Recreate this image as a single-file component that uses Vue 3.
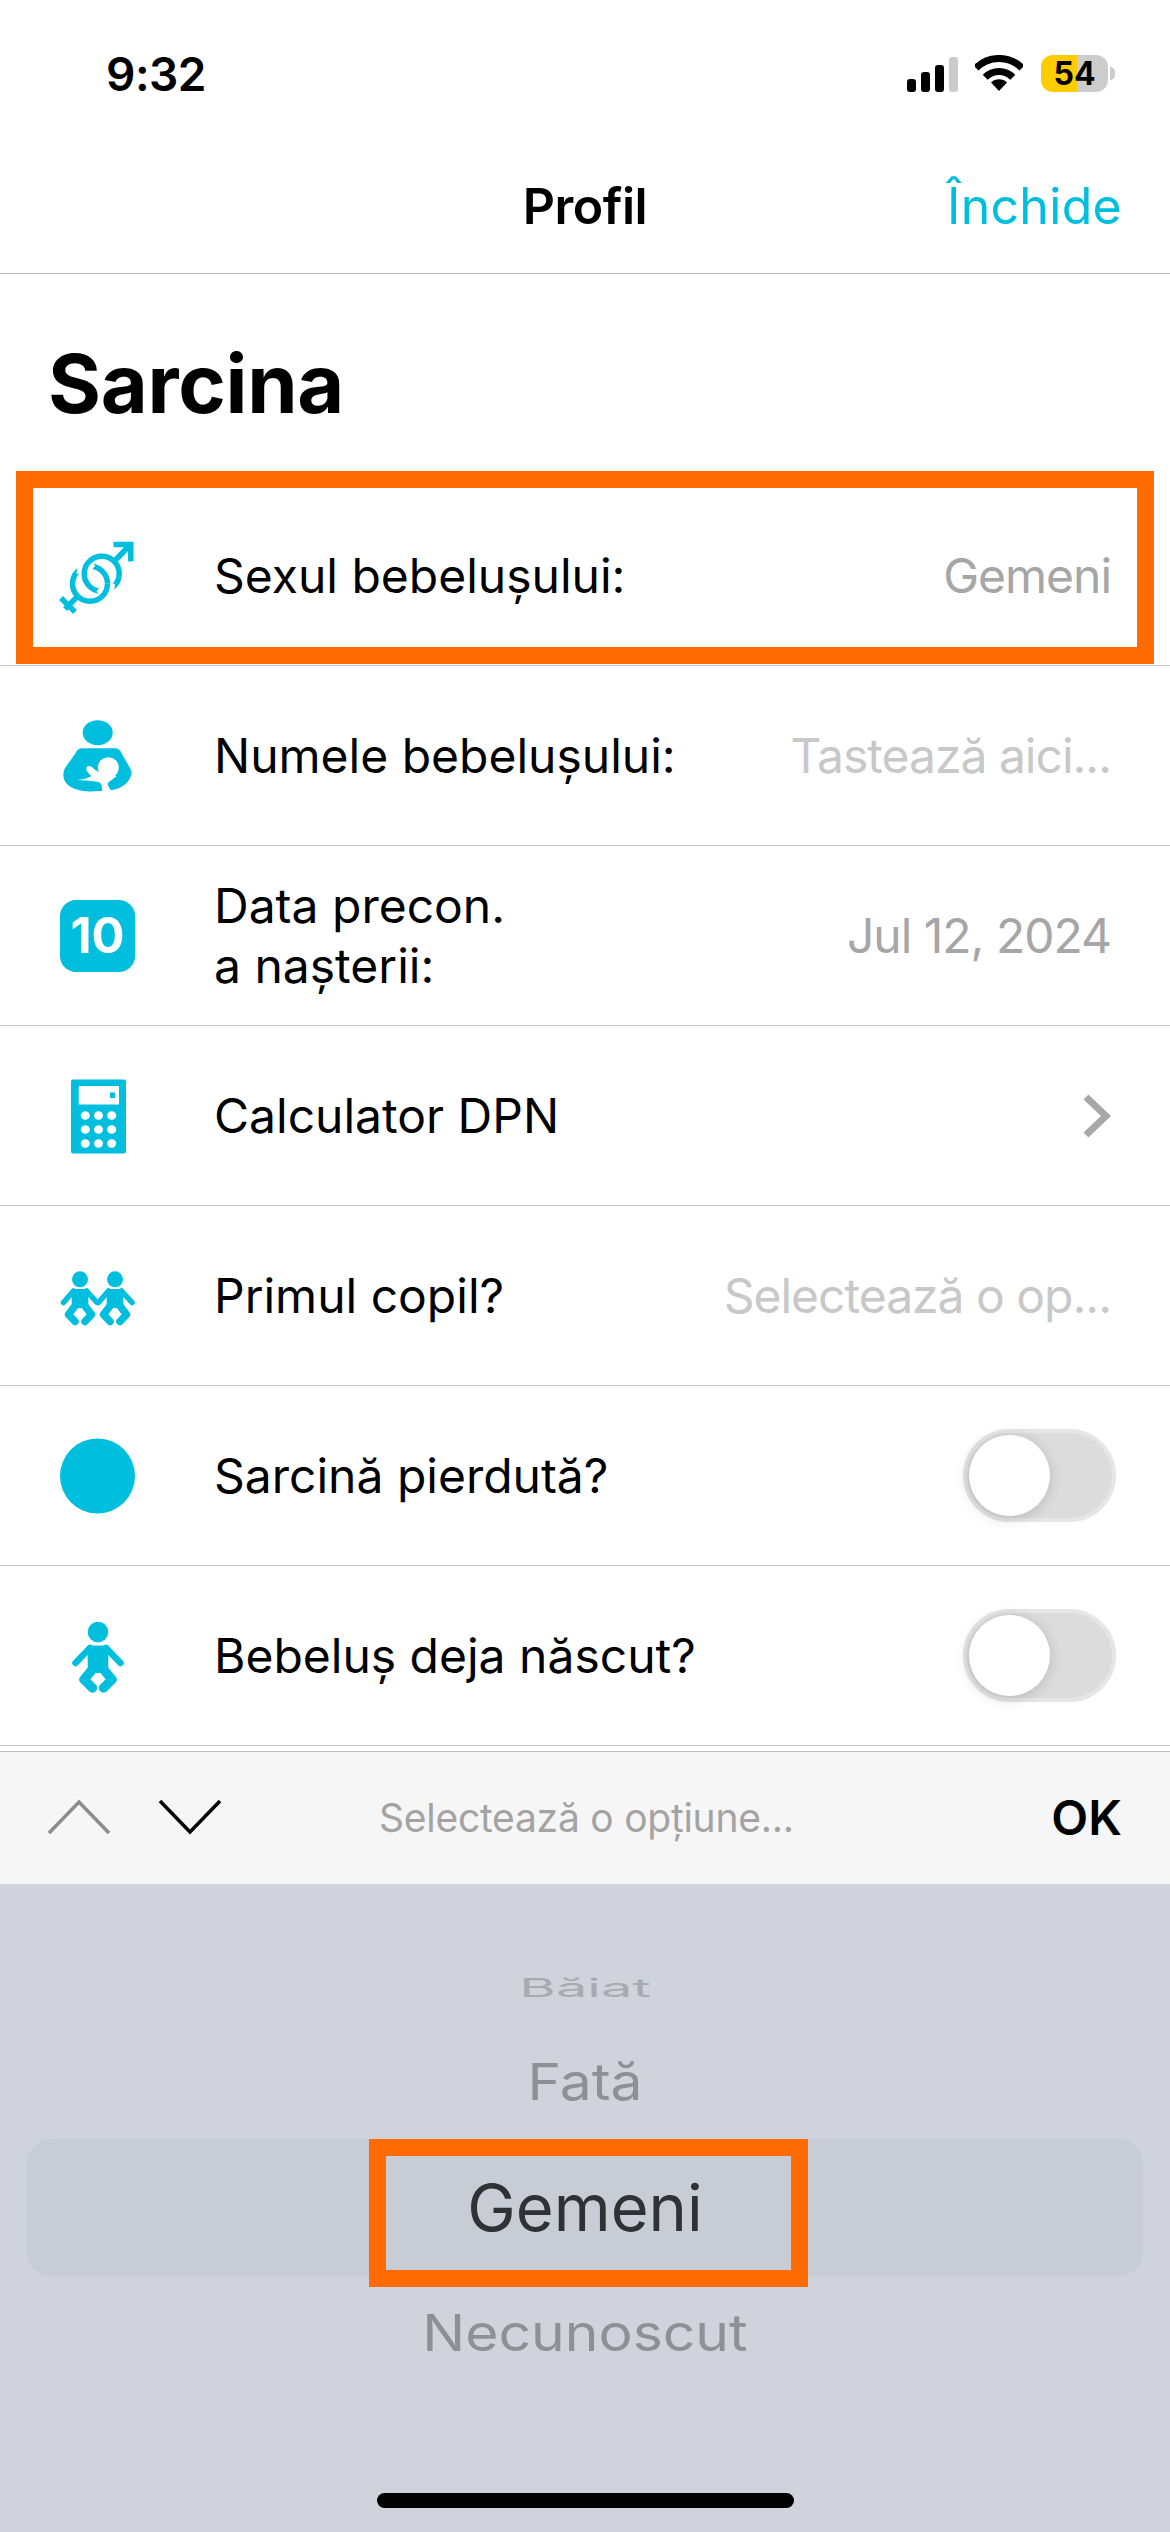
<script setup>
// Rows of the pregnancy profile form
const rows = [
  { icon: 'gender', label: ['Sexul bebelușului:'], value: 'Gemeni', kind: 'value', marked: true },
  { icon: 'mother', label: ['Numele bebelușului:'], value: 'Tastează aici...', kind: 'hint' },
  { icon: 'date', label: ['Data precon.', 'a nașterii:'], value: 'Jul 12, 2024', kind: 'value' },
  { icon: 'calc', label: ['Calculator DPN'], kind: 'chevron' },
  { icon: 'twins', label: ['Primul copil?'], value: 'Selectează o op...', kind: 'hint' },
  { icon: 'dot', label: ['Sarcină pierdută?'], kind: 'toggle' },
  { icon: 'baby', label: ['Bebeluș deja născut?'], kind: 'toggle' }
];

const keys = [85.3, 98.5, 111.7];
const keyRows = [1115, 1129, 1143];
</script>

<template>
  <div class="screen">
    <header class="status">
      <span class="time">9:32</span>
      <div class="status-icons">
        <svg class="signal" width="51" height="36" viewBox="0 0 51 36">
          <rect x="0" y="22" width="9" height="13" rx="3" />
          <rect x="14" y="15" width="9" height="20" rx="3" />
          <rect x="28" y="8" width="9" height="27" rx="3" />
          <rect x="42" y="0" width="9" height="35" rx="3" fill="#cccccc" />
        </svg>
        <svg class="wifi" width="48" height="36" viewBox="0 0 48 36">
          <path d="M1 13A32.5 32.5 0 0 1 47 13" fill="none" stroke="#000" stroke-width="7" />
          <path d="M10.2 22.2A19.5 19.5 0 0 1 37.8 22.2" fill="none" stroke="#000" stroke-width="7" />
          <path d="M24 36L16 27.5A11.5 11.5 0 0 1 32 27.5Z" />
        </svg>
        <div class="battery"><span>54</span></div>
        <div class="nub"></div>
      </div>
    </header>

    <nav class="nav">
      <span></span>
      <span class="nav-title">Profil</span>
      <span class="nav-close">Închide</span>
    </nav>

    <h1 class="title">Sarcina</h1>

    <section>
      <div v-for="row in rows" :key="row.icon" class="row">
        <div v-if="row.icon === 'date'" class="icon-date">10</div>
        <svg v-else-if="row.icon === 'gender'" class="icon" viewBox="0 -5 100 100" fill="none" stroke="#00bede" stroke-width="5.5">
          <circle cx="40" cy="52.7" r="17.5" />
          <path d="M34 42.7A17.5 17.5 0 0 1 40.4 29.2" stroke="#fff" stroke-width="15" />
          <circle cx="51.7" cy="42.7" r="17.5" />
          <path d="M57.5 52.7A17.5 17.5 0 0 1 51.2 66.1" stroke="#fff" stroke-width="15" />
          <path d="M57.5 52.7A17.5 17.5 0 0 1 51.2 66.1" />
          <path d="M64.5 30L80 14M63.5 13.5H80.8V30.5M28 65L15 78M11 67L25 81" />
        </svg>
        <svg v-else-if="row.icon === 'mother'" class="icon" viewBox="0 -5 100 100" fill="#00bede">
          <ellipse cx="47.7" cy="21.7" rx="15" ry="12.5" />
          <path d="M32 37.3H65C68 37.3 70 39 72 43L80 57C81.5 60 81.7 61 81.7 62C80 72 70 79 60 79C50 80 42 81 33 80C20 78 13 72 13.3 63C13.5 61 14 59 15 57L25 43C27 39 29 37.3 32 37.3Z" />
          <circle cx="58.3" cy="56.7" r="10.5" fill="#fff" />
          <path d="M26.7 69C33 68.3 38 67.5 41.5 65C38 62 35.5 59 36.5 56.5C38 54 41.5 55 44 58L50 62L66.7 65L59.3 70.7C57.3 72 57.3 75 60.7 78.3L54 82C51 79 52.5 77 51.7 75C51.5 72 50 71 46.7 70.7C40 69.5 33 69.3 26.7 69Z" fill="#fff" />
        </svg>
        <svg v-else-if="row.icon === 'calc'" class="icon" viewBox="50 1065.5 100 100" fill="#00bede">
          <rect x="71" y="1079" width="55" height="74" rx="2" />
          <rect x="78.7" y="1085.5" width="40.3" height="18.5" fill="#fff" />
          <rect x="110" y="1092" width="5" height="5.5" />
          <g v-for="y in keyRows" :key="y">
            <ellipse v-for="x in keys" :key="x" :cx="x" :cy="y" rx="4.5" ry="4.3" fill="#fff" />
          </g>
        </svg>
        <svg v-else-if="row.icon === 'twins'" class="icon" viewBox="0 -5 100 100">
          <g id="twin-shape" fill="#00bede" stroke="#00bede" stroke-linecap="round" stroke-linejoin="round">
            <circle cx="30" cy="28.3" r="8" stroke="none" />
            <path d="M21.7 38H38.3V57H21.7Z" stroke="none" />
            <path d="M23.5 40L13.5 51.5M36.5 40L47 51.5" fill="none" stroke-width="5.5" />
            <path d="M25 55L18.5 63.5L25 70.5M35 55L41.5 63.5L35 70.5" fill="none" stroke-width="7.5" />
          </g>
          <use href="#twin-shape" transform="translate(35 0)" />
        </svg>
        <svg v-else-if="row.icon === 'dot'" class="icon" viewBox="0 0 100 100">
          <circle cx="47.5" cy="50" r="37.5" fill="#00bede" />
        </svg>
        <svg v-else class="icon" viewBox="0 -5 100 100">
          <g fill="#00bede" stroke="#00bede" stroke-linecap="round" stroke-linejoin="round">
            <circle cx="48" cy="21" r="10.3" stroke="none" />
            <path d="M37.7 34.5H58.3V62H37.7Z" stroke="none" />
            <path d="M40 37L25.5 52M56 37L70.5 52" fill="none" stroke-width="6.5" />
            <path d="M42 59L34 68.5L42.5 77M54 59L62 68.5L53.5 77" fill="none" stroke-width="9.5" />
          </g>
        </svg>

        <div class="label">
          <div v-for="line in row.label" :key="line">{{ line }}</div>
        </div>

        <span v-if="row.value" :class="row.kind">{{ row.value }}</span>
        <svg v-else-if="row.kind === 'chevron'" class="chevron" width="27" height="44" viewBox="0 0 27 44" fill="none" stroke="#a8a8a8" stroke-width="7">
          <path d="M2 3L22 22L2 41" />
        </svg>
        <div v-else class="toggle"><div class="knob"></div></div>

        <div v-if="row.marked" class="mark mark-row"></div>
      </div>
    </section>

    <div class="toolbar">
      <svg class="arrow" width="64" height="36" viewBox="0 0 64 36" fill="none" stroke="#8c8c8c" stroke-width="3.5">
        <path d="M2 34L32 3L62 34" />
      </svg>
      <svg class="arrow arrow-down" width="64" height="36" viewBox="0 0 64 36" fill="none" stroke="#000" stroke-width="3.5">
        <path d="M2 2L32 33L62 2" />
      </svg>
      <span class="toolbar-label">Selectează o opțiune...</span>
      <span class="ok">OK</span>
    </div>

    <div class="picker">
      <div class="item item-far">Băiat</div>
      <div class="item item-near">Fată</div>
      <div class="item item-selected">
        Gemeni
        <div class="mark mark-item"></div>
      </div>
      <div class="item item-near item-after">Necunoscut</div>
      <div class="home"></div>
    </div>
  </div>
</template>

<style scoped>
.screen {
  width: 1170px;
  height: 2532px;
  display: flex;
  flex-direction: column;
  background: #fff;
  color: #000;
  font-family: Inter, "Liberation Sans", sans-serif;
  overflow: hidden;
}

.status {
  height: 132px;
  box-sizing: border-box;
  padding: 55px 55px 0 106px;
  display: flex;
  justify-content: space-between;
  align-items: flex-start;
}

.time {
  font-size: 46px;
  font-weight: 600;
  line-height: 38px;
  letter-spacing: -0.5px;
}

.status-icons {
  display: flex;
  align-items: flex-start;
}

.signal {
  margin-top: 2px;
}

.wifi {
  margin-left: 17px;
}

.battery {
  margin-left: 18px;
  width: 67px;
  height: 37px;
  border-radius: 12px;
  background: linear-gradient(90deg, #ffcc00 54%, #cccccc 54%);
  display: flex;
  align-items: center;
  justify-content: center;
  font-size: 32px;
  font-weight: 700;
}

.nub {
  width: 5px;
  height: 13px;
  margin: 12px 0 0 2px;
  border-radius: 0 6px 6px 0;
  background: #cccccc;
}

.nav {
  height: 142px;
  box-sizing: border-box;
  padding: 6px 48px 0;
  display: grid;
  grid-template-columns: 1fr auto 1fr;
  align-items: center;
  border-bottom: 1px solid #b4b4b4;
  font-size: 50px;
}

.nav-title {
  font-weight: 600;
  letter-spacing: -0.5px;
}

.nav-close {
  justify-self: end;
  color: #00bede;
  letter-spacing: 0.3px;
}

.title {
  margin: 0;
  height: 212px;
  box-sizing: border-box;
  padding: 60px 0 0 48px;
  font-size: 81px;
  line-height: 100px;
  font-weight: 700;
  letter-spacing: -0.3px;
}

.row {
  position: relative;
  height: 180px;
  box-sizing: border-box;
  display: flex;
  align-items: center;
  padding: 0 59px 0 50px;
  border-bottom: 1px solid #c8c8c8;
  font-size: 48px;
}

.icon {
  width: 100px;
  height: 100px;
  flex: none;
}

.icon-date {
  width: 75px;
  height: 72px;
  flex: none;
  margin: 0 15px 0 10px;
  border-radius: 16px;
  background: #00bede;
  color: #fff;
  font-size: 49px;
  font-weight: 700;
  line-height: 72px;
  text-align: center;
}

.label {
  margin-left: 64px;
  line-height: 60px;
  flex: 1;
}

.value,
.hint {
  letter-spacing: -1px;
}

.value {
  color: #a6a6a6;
}

.hint {
  color: #c8c8c8;
}

.toggle {
  width: 153px;
  height: 93px;
  box-sizing: border-box;
  margin-right: -5px;
  padding-left: 2px;
  display: flex;
  align-items: center;
  border: 4px solid #e6e6e6;
  border-radius: 47px;
  background: #dcdcdc;
}

.knob {
  width: 81px;
  height: 81px;
  border-radius: 50%;
  background: #fff;
  box-shadow: -1px 2px 14px rgba(0, 0, 0, 0.18);
}

.mark {
  position: absolute;
  box-sizing: border-box;
  border: 17px solid #ff6b00;
  pointer-events: none;
}

.mark-row {
  left: 16px;
  right: 16px;
  top: -15px;
  height: 193px;
}

.mark-item {
  left: 342px;
  top: 0;
  width: 439px;
  height: 148px;
}

.toolbar {
  margin-top: 5px;
  height: 133px;
  box-sizing: border-box;
  padding: 47px 48px 0 47px;
  display: flex;
  align-items: flex-start;
  border-top: 1px solid #c0c0c0;
  background: #f6f6f6;
}

.arrow-down {
  margin-left: 47px;
}

.toolbar-label {
  margin-left: 157px;
  flex: 1;
  font-size: 39px;
  line-height: 38px;
  color: #a3a3a3;
  letter-spacing: -0.25px;
}

.ok {
  font-size: 48px;
  line-height: 38px;
  font-weight: 600;
}

.picker {
  flex: 1;
  display: flex;
  flex-direction: column;
  align-items: center;
  background: #d0d3db;
  padding-top: 74px;
}

.item {
  height: 60px;
  line-height: 60px;
}

.item-far {
  font-size: 56px;
  color: #a8aab0;
  transform: scaleY(0.46);
}

.item-near {
  margin-top: 34px;
  font-size: 57px;
  color: #8e9095;
  transform: scaleY(0.88);
}

.item-selected {
  position: relative;
  align-self: stretch;
  margin: 27px 27px 0;
  height: 137px;
  line-height: 137px;
  border-radius: 24px;
  background: #c8ccd5;
  color: #303135;
  font-size: 65px;
  text-align: center;
  transform: none;
}

.item-after {
  margin-top: 27px;
}

.home {
  margin-top: auto;
  margin-bottom: 24px;
  width: 417px;
  height: 15px;
  border-radius: 8px;
  background: #000;
}
</style>
